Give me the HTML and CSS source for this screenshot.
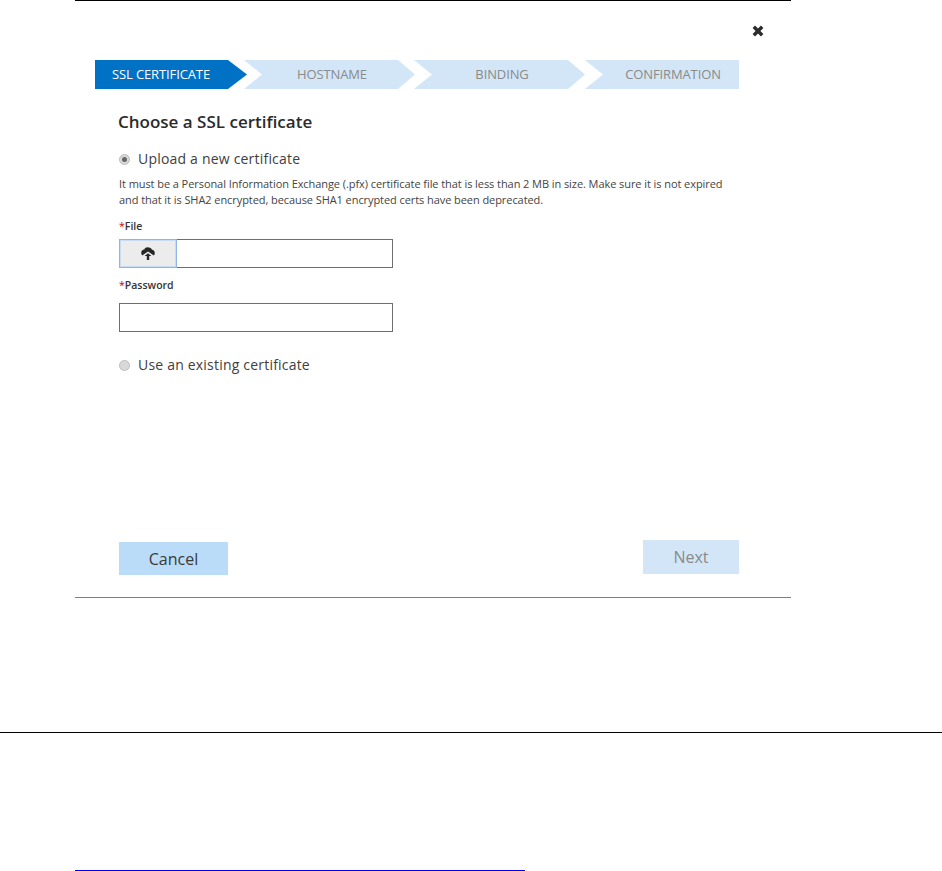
FILE: index.html
```html
<!DOCTYPE html>
<html lang="en">
<head>
<meta charset="utf-8">
<title>Choose a SSL certificate</title>
<link rel="stylesheet" href="styles.css">
</head>
<body>
<section class="dialog">
  <div class="close-row">
    <svg class="close" viewBox="0 0 12 12" aria-label="Close"><path d="M3 .6 6 3.6 9 .6 11.4 3 8.4 6 11.4 9 9 11.4 6 8.4 3 11.4.6 9 3.600 6 .6 3Z"/></svg>
  </div>
  <ol class="steps">
    <li class="step step-first step-active">SSL CERTIFICATE</li>
    <li class="step step-mid">HOSTNAME</li>
    <li class="step step-mid">BINDING</li>
    <li class="step step-last">CONFIRMATION</li>
  </ol>
  <form class="form">
    <h1 class="title">Choose a SSL certificate</h1>
    <div class="radio-row radio-first">
      <span class="radio radio-on"></span>
      <span class="radio-label">Upload a new certificate</span>
    </div>
    <p class="help">It must be a Personal Information Exchange (.pfx) certificate file that is less than 2 MB in size. Make sure it is not expired<br>and that it is SHA2 encrypted, because SHA1 encrypted certs have been deprecated.</p>
    <div class="label label-file"><span class="req">*</span>File</div>
    <div class="field">
      <span class="upload">
        <svg class="upload-icon" viewBox="0 0 14 13"><path d="M6.500.2C5 .2 3.800 1.100 3.300 2.500 1.500 2.700.2 4.100.2 5.800c0 1.100.4 2 1 2.600L7 4.600l5.800 3.800c.6-.6 1-1.500 1-2.500 0-1.600-1.200-2.900-2.800-3.100C10.600 1.200 8.700.2 6.500.2Z"/><path d="M7 6.200 3.600 9h2.200v4h2.400V9h2.200Z"/></svg>
      </span>
    </div>
    <div class="label label-password"><span class="req">*</span>Password</div>
    <div class="field"></div>
    <div class="radio-row radio-second">
      <span class="radio"></span>
      <span class="radio-label">Use an existing certificate</span>
    </div>
    <div class="actions">
      <button class="btn btn-cancel" type="button">Cancel</button>
      <button class="btn btn-next" type="button">Next</button>
    </div>
  </form>
</section>
<hr class="page-rule">
<div class="link-line"></div>
</body>
</html>
```
FILE: styles.css
```css
* { box-sizing: border-box; }
html, body { margin: 0; padding: 0; background: #fff; }
body { height: 871px; overflow: hidden; font-family: "Open Sans", "Noto Sans", sans-serif; color: #333; }

.dialog {
  margin-left: 75px;
  width: 716px;
  height: 598px;
  border-top: 1px solid #000;
  border-bottom: 1px solid #7f7f7f;
  display: flex;
  flex-direction: column;
}

.close-row { height: 59px; padding: 24px 27px 0 0; display: flex; justify-content: flex-end; }
.close { width: 12px; height: 12px; fill: #2b2b2b; }

.steps {
  list-style: none;
  margin: 0 0 0 20px;
  padding: 0;
  display: flex;
  height: 29px;
}
.step {
  height: 29px;
  line-height: 28px;
  font-size: 13px;
  letter-spacing: -.12px;
  text-align: center;
  background: #d2e6f8;
  color: #8a8a8a;
}
.step-first { width: 152px; padding-right: 20px; clip-path: polygon(0 0, 133px 0, 100% 50%, 133px 100%, 0 100%); }
.step-active { background: #0072c6; color: #fff; }
.step-mid { width: 171px; margin-left: -3px; padding-left: 5px; clip-path: polygon(0 0, 154px 0, 100% 50%, 154px 100%, 0 100%, 18px 50%); }
.step-mid + .step-mid { margin-left: -1px; }
.step-last { width: 154px; padding-left: 22px; clip-path: polygon(0 0, 100% 0, 100% 100%, 0 100%, 18px 50%); }

.form { flex: 1; padding: 0 0 0 44px; width: 664px; display: flex; flex-direction: column; }
.title { margin: 21px 0 0 -1px; font-size: 17px; line-height: 24px; font-weight: 600; color: #2b2b2b; }

.radio-row { display: flex; align-items: center; height: 20px; }
.radio-first { margin-top: 15px; }
.radio-second { margin-top: 23px; }
.radio {
  width: 11px; height: 11px; border-radius: 50%;
  background: #d9d9d9; border: 1px solid #bdbdbd;
  margin-right: 8px; flex: none; position: relative;
}
.radio-on::after {
  content: ""; position: absolute; left: 2px; top: 2px;
  width: 5px; height: 5px; border-radius: 50%; background: #666;
}
.radio-label { font-size: 14px; line-height: 18px; letter-spacing: .2px; color: #404040; }

.help { margin: 7px 0 0; font-size: 11px; line-height: 16px; color: #444; letter-spacing: -.07px; white-space: nowrap; }

.label { font-size: 10.5px; line-height: 14px; font-weight: 600; color: #333; }
.label-file { margin-top: 11px; }
.label-password { margin-top: 10px; }
.req { color: #c00000; font-weight: 400; }

.field { height: 29px; width: 274px; border: 1px solid #6e6e6e; background: #fff; margin-top: 6px; display: flex; }
.label-password + .field { margin-top: 11px; }
.upload {
  width: 58px; height: 29px; margin: -1px 0 0 -1px;
  background: #ececec; border: 1px solid #8fb4ea;
  box-shadow: inset 0 0 0 1px #c9daf3;
  display: flex; align-items: center; justify-content: center;
}
.upload-icon { width: 14px; height: 13px; fill: #262626; }

.actions { margin-top: auto; margin-bottom: 22px; display: flex; justify-content: space-between; align-items: flex-start; }
.btn { border: 0; padding: 0; font-family: inherit; }
.btn-cancel { width: 109px; height: 33px; margin-top: 2px; background: #bbdcf8; color: #3a3a3a; font-size: 16px; }
.btn-next { width: 96px; height: 34px; background: #d2e6f8; color: #8a8a8a; font-size: 16px; }

.page-rule { margin: 134px 0 0; border: 0; height: 1px; background: #000; }
.link-line { margin: 137px 0 0 75px; width: 450px; height: 1px; background: #0000ff; }
```
